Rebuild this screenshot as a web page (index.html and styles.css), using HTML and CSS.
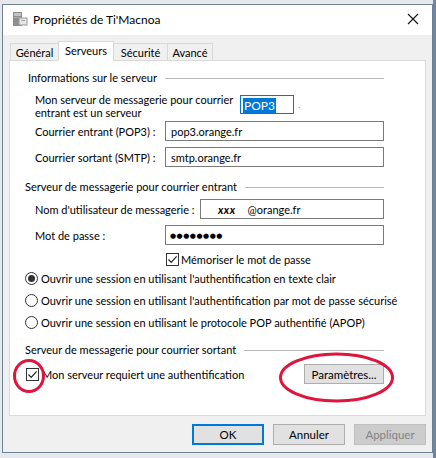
FILE: index.html
```html
<!DOCTYPE html>
<html lang="fr">
<head>
<meta charset="utf-8">
<title>Propriétés de Ti'Macnoa</title>
<link rel="stylesheet" href="styles.css">
</head>
<body>
<div class="dialog">
  <div class="titlebar">
    <svg class="app-icon" width="16" height="16" viewBox="0 0 16 16">
      <rect x="1" y="1" width="9" height="14" fill="#8d8d8d"/>
      <rect x="2" y="2" width="7" height="3" fill="#c4c4c4"/>
      <rect x="2" y="6" width="7" height="1" fill="#b0b0b0"/>
      <rect x="7" y="7" width="8" height="7" fill="#e6e6e6" stroke="#9a9a9a" stroke-width="1"/>
      <rect x="9" y="9" width="4" height="1" fill="#a8a8a8"/>
    </svg>
    <span class="title">Propriétés de Ti'Macnoa</span>
    <svg class="close" width="12" height="12" viewBox="0 0 12 12">
      <path d="M1 1 L11 11 M11 1 L1 11" stroke="#111" stroke-width="1.1" fill="none"/>
    </svg>
  </div>
  <div class="content">
    <div class="tabs">
      <div class="tab w-gen">Général</div>
      <div class="tab active w-srv">Serveurs</div>
      <div class="tab w-sec">Sécurité</div>
      <div class="tab w-adv">Avancé</div>
    </div>
    <div class="panel">
      <div class="group-title g-first"><span>Informations sur le serveur</span><i class="rule"></i></div>
      <div class="row-server">
        <div class="label-two">Mon serveur de messagerie pour courrier<br>entrant est un serveur</div>
        <div class="pop3"><span class="sel">POP3</span></div>
        <span class="dot">.</span>
      </div>
      <div class="field f-entrant">
        <label class="flabel">Courrier entrant (POP3) :</label>
        <div class="input">pop3.orange.fr</div>
      </div>
      <div class="field f-gap">
        <label class="flabel">Courrier sortant (SMTP) :</label>
        <div class="input">smtp.orange.fr</div>
      </div>
      <div class="group-title g-mid"><span>Serveur de messagerie pour courrier entrant</span><i class="rule"></i></div>
      <div class="field f-user">
        <label class="flabel wide">Nom d'utilisateur de messagerie :</label>
        <div class="input user"><b class="xxx">xxx</b><span class="domain">@orange.fr</span></div>
      </div>
      <div class="field f-gap">
        <label class="flabel">Mot de passe :</label>
        <div class="input pass">●●●●●●●●</div>
      </div>
      <div class="check-row memo">
        <span class="checkbox"><svg width="11" height="11" viewBox="0 0 11 11"><path d="M1.5 5.5 L4.2 8.3 L9.6 2.4" stroke="#222" stroke-width="1.2" fill="none"/></svg></span>
        <span>Mémoriser le mot de passe</span>
      </div>
      <div class="radio-row r-first"><span class="radio on"></span><span>Ouvrir une session en utilisant l'authentification en texte clair</span></div>
      <div class="radio-row"><span class="radio"></span><span>Ouvrir une session en utilisant l'authentification par mot de passe sécurisé</span></div>
      <div class="radio-row"><span class="radio"></span><span>Ouvrir une session en utilisant le protocole POP authentifié (APOP)</span></div>
      <div class="group-title g-last"><span>Serveur de messagerie pour courrier sortant</span><i class="rule"></i></div>
      <div class="auth-row">
        <div class="check-row">
          <span class="checkbox"><svg width="11" height="11" viewBox="0 0 11 11"><path d="M1.5 5.5 L4.2 8.3 L9.6 2.4" stroke="#222" stroke-width="1.2" fill="none"/></svg></span>
          <span>Mon serveur requiert une authentification</span>
        </div>
        <button class="btn params">Paramètres...</button>
      </div>
    </div>
    <div class="buttons">
      <button class="btn dlg default">OK</button>
      <button class="btn dlg">Annuler</button>
      <button class="btn dlg disabled">Appliquer</button>
    </div>
  </div>
</div>
<svg class="annotations" width="436" height="458" viewBox="0 0 436 458">
  <ellipse cx="29" cy="376" rx="14.5" ry="15.5" fill="none" stroke="#e0143c" stroke-width="3"/>
  <ellipse cx="336.5" cy="377.5" rx="56" ry="23.5" fill="none" stroke="#e0143c" stroke-width="3"/>
</svg>
</body>
</html>
```
FILE: styles.css
```css
* { box-sizing: border-box; }
html, body { margin: 0; padding: 0; }
body {
  width: 436px;
  height: 458px;
  overflow: hidden;
  background: linear-gradient(to right, #e6e8eb 0, #e6e8eb 433px, #6f86a3 433px);
  font-family: "Lato", "Liberation Sans", sans-serif;
  font-size: 11px;
  color: #000;
  position: relative;
  white-space: nowrap;
}
.dialog {
  margin: 4px 0 0 2px;
  width: 431px;
  height: 449px;
  border: 1px solid #6d8299;
  background: #f0f0f0;
  display: flex;
  flex-direction: column;
}
.titlebar {
  height: 30px;
  background: #fff;
  display: flex;
  align-items: center;
  padding-left: 9px;
  padding-right: 13px;
}
.app-icon { flex: none; margin-top: -2px; }
.title {
  margin-left: 5px;
  font-size: 12px;
  flex: 1;
  margin-top: -2px;
}
.close { flex: none; margin-top: -3px; }
.content {
  padding: 6px 6px 0 6px;
  display: flex;
  flex-direction: column;
}
.tabs {
  display: flex;
  align-items: flex-end;
  height: 20px;
  margin-left: 1px;
  margin-bottom: -1px;
  position: relative;
  z-index: 1;
}
.tab {
  height: 18px;
  border: 1px solid #d9d9d9;
  background: #f0f0f0;
  display: flex;
  align-items: center;
  justify-content: center;
  margin-left: -1px;
  padding-top: 1px;
}
.tab.active {
  height: 20px;
  background: #fff;
  border-bottom-color: #fff;
  padding-top: 0;
  padding-bottom: 1px;
}
.w-gen { width: 49px; margin-left: 0; }
.w-srv { width: 56px; }
.w-sec { width: 55px; }
.w-adv { width: 46px; }
.panel {
  height: 356px;
  width: 417px;
  background: #fff;
  border: 1px solid #d9d9d9;
  padding: 9px 41px 0 15px;
  display: flex;
  flex-direction: column;
}
.group-title {
  display: flex;
  align-items: center;
  height: 15px;
  line-height: 15px;
}
.group-title .rule {
  flex: 1;
  height: 1px;
  background: #b9b9b9;
  margin-left: 8px;
  margin-top: 1px;
}
.g-first { padding-left: 3px; }
.g-mid { margin-top: 12px; }
.g-last { margin-top: 12px; }
.row-server {
  margin-top: 8px;
  display: flex;
  align-items: flex-start;
  padding-left: 10px;
}
.label-two {
  width: 205px;
  flex: none;
  line-height: 13px;
}
.pop3 {
  margin-top: 2px;
  width: 54px;
  height: 19px;
  border: 1px solid #0078d7;
  padding: 1px 0 0 2px;
  display: flex;
  align-items: center;
}
.sel {
  background: #0078d7;
  color: #fff;
  line-height: 15px;
  padding: 0 1px;
  font-size: 12px;
}
.dot {
  margin-left: 4px;
  margin-top: 5px;
  color: #9a9a9a;
  font-size: 10px;
}
.field {
  display: flex;
  align-items: center;
  height: 20px;
  padding-left: 10px;
}
.f-entrant { margin-top: 2px; }
.f-gap { margin-top: 6px; }
.f-user { margin-top: 5px; }
.flabel { width: 130px; flex: none; }
.flabel.wide { width: 165px; }
.input {
  width: 219px;
  height: 20px;
  border: 1px solid #7a7a7a;
  background: #fff;
  display: flex;
  align-items: center;
  padding-left: 5px;
  padding-top: 1px;
}
.input.user { width: 184px; }
.xxx {
  font-style: italic;
  font-weight: bold;
  margin-left: 12px;
  letter-spacing: 0.5px;
}
.domain { margin-left: 12px; }
.pass {
  font-family: "DejaVu Sans", sans-serif;
  font-size: 7px;
  letter-spacing: 0.5px;
  padding-left: 4px;
}
.check-row {
  display: flex;
  align-items: center;
  height: 15px;
}
.memo {
  margin-top: 7px;
  padding-left: 141px;
}
.checkbox {
  width: 13px;
  height: 13px;
  border: 1px solid #333;
  background: #fff;
  display: flex;
  align-items: center;
  justify-content: center;
  margin-right: 2px;
  flex: none;
}
.radio-row {
  display: flex;
  align-items: center;
  height: 15px;
  margin-top: 7px;
}
.r-first { margin-top: 4px; }
.radio {
  width: 13px;
  height: 13px;
  border: 1px solid #333;
  border-radius: 50%;
  background: #fff;
  margin-right: 3px;
  display: flex;
  align-items: center;
  justify-content: center;
  flex: none;
}
.radio.on::after {
  content: "";
  width: 7px;
  height: 7px;
  border-radius: 50%;
  background: #333;
}
.auth-row {
  margin-top: 7px;
  height: 20px;
  display: flex;
  align-items: center;
  justify-content: space-between;
  padding-left: 1px;
}
.auth-row .checkbox { margin-right: 3px; }
.btn {
  font-family: inherit;
  font-size: 11.5px;
  color: #000;
  background: #e1e1e1;
  border: 1px solid #adadad;
  padding: 0;
  margin: 0;
}
.params {
  width: 80px;
  height: 20px;
}
.buttons {
  margin-top: 8px;
  display: flex;
  justify-content: flex-end;
  gap: 9px;
}
.dlg {
  width: 72px;
  height: 21px;
}
.default {
  border: 2px solid #0078d7;
}
.disabled {
  background: #cccccc;
  border-color: #bfbfbf;
  color: #838383;
}
.annotations {
  position: absolute;
  left: 0;
  top: 0;
  pointer-events: none;
}
```
